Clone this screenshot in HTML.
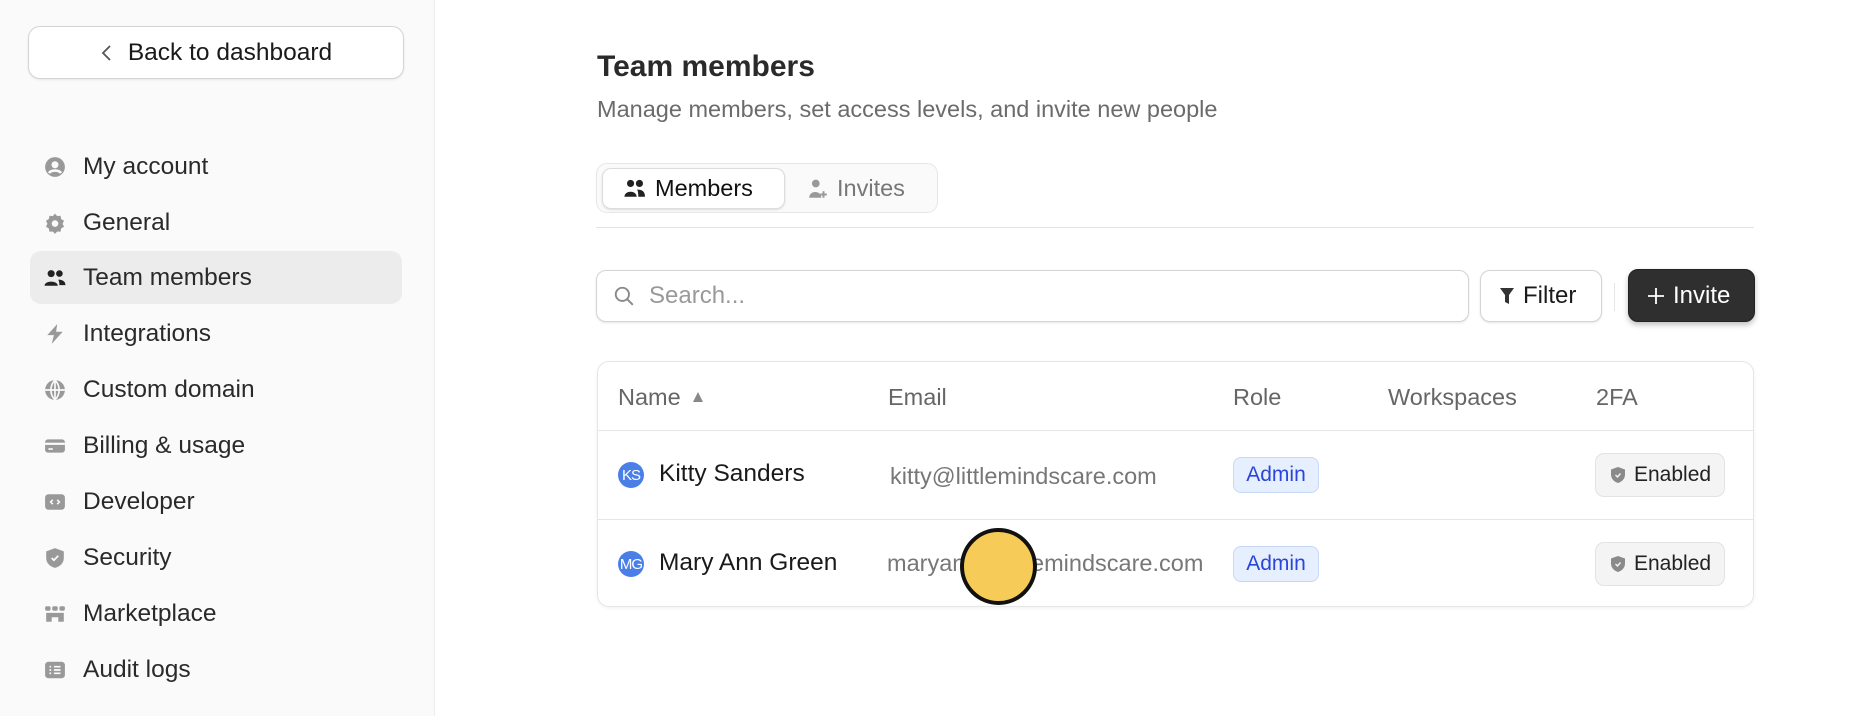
<!DOCTYPE html>
<html><head><style>
*{box-sizing:border-box;margin:0;padding:0}
body{width:1856px;height:716px;overflow:hidden;background:#fff;font-family:"Liberation Sans",sans-serif;color:#1a1a1a;position:relative}
.side{position:absolute;left:0;top:0;width:435px;height:716px;background:#fafafa;border-right:1px solid #ececec}
.back{position:absolute;left:28px;top:26px;width:376px;height:53px;border:1px solid #d4d4d4;border-radius:12px;background:#fff;box-shadow:0 1px 2px rgba(0,0,0,.08);font-size:24.5px;display:flex;align-items:center;justify-content:center;gap:14px}
.nav{position:absolute;left:30px;width:372px;height:53px;border-radius:11px;display:flex;align-items:center;font-size:24.5px;color:#2a2a2a}
.nav svg{position:absolute;left:14px;width:22px;height:22px}
.nav span{position:absolute;left:53px}
.act{background:#ececec}
.abs{position:absolute}
.h1{left:597px;top:50px;font-size:30px;font-weight:bold;color:#2a2a2a}
.sub{left:597px;top:96px;font-size:23.5px;color:#6b6b6b}
.tabs{left:596px;top:163px;width:342px;height:50px;border:1px solid #e6e6e6;border-radius:11px;background:#fafafa}
.tab{position:absolute;top:4px;height:41px;border-radius:9px;display:flex;align-items:center;font-size:23.5px;gap:8px;padding-left:22px}
.btn{border:1px solid #d4d4d4;border-radius:10px;background:#fff;box-shadow:0 1px 2px rgba(0,0,0,.1);display:flex;align-items:center;font-size:24px}
.tbl{left:597px;top:361px;width:1157px;height:246px;border:1px solid #e6e6e6;border-radius:12px;box-shadow:0 1px 3px rgba(0,0,0,.06);overflow:hidden}
.th{position:absolute;top:22px;font-size:23.5px;color:#666}
.row{position:absolute;left:0;width:100%;height:88px;border-top:1px solid #e6e6e6}
.av{position:absolute;left:20px;width:26px;height:26px;border-radius:50%;background:#4a7fe8;color:#fff;font-size:15px;display:flex;align-items:center;justify-content:center;letter-spacing:-1px}
.nm{position:absolute;left:61px;font-size:24.5px;color:#1a1a1a}
.em{position:absolute;left:292px;font-size:23.5px;color:#777}
.adm{position:absolute;left:635px;width:86px;height:36px;border:1px solid #c7d8f6;background:#e6effd;border-radius:8px;color:#2b45d8;font-size:21px;display:flex;align-items:center;justify-content:center}
.en{position:absolute;left:997px;width:130px;height:44px;border:1px solid #e3e3e3;background:#f4f4f4;border-radius:9px;font-size:21px;display:flex;align-items:center;gap:8px;padding-left:14px;color:#222}
</style></head><body>
<div class="side">
 <div class="back"><svg width="14" height="20" viewBox="0 0 14 20"><path d="M10 3 L3 10 L10 17" fill="none" stroke="#555" stroke-width="1.8"/></svg><span>Back to dashboard</span></div>
 <div class="nav" style="top:140px"><svg viewBox="0 0 20 20"><circle cx="10" cy="10" r="9" fill="#999"/><circle cx="10" cy="8" r="3.2" fill="#fafafa"/><path d="M4.5 15.5c2-3 9-3 11 0" stroke="#fafafa" stroke-width="2.4" fill="none"/></svg><span>My account</span></div>
 <div class="nav" style="top:196px"><svg viewBox="0 0 20 20"><path d="M10 1.5l2 2.2 3-.3.6 3 2.6 1.6-1.3 2.7 1.3 2.7-2.6 1.6-.6 3-3-.3-2 2.2-2-2.2-3 .3-.6-3L1.8 13.4l1.3-2.7L1.8 8l2.6-1.6.6-3 3 .3z" fill="#999"/><circle cx="10" cy="10.5" r="3" fill="#fafafa"/></svg><span>General</span></div>
 <div class="nav act" style="top:251px"><svg viewBox="0 0 20 20"><circle cx="6.5" cy="6" r="3.2" fill="#222"/><circle cx="14" cy="6" r="3" fill="#222"/><path d="M0.5 17c0-5 12-5 12 0z" fill="#222"/><path d="M13 11.5c3 0 6.5 1 6.5 5h-5.5c0-2-.3-3.5-1-5z" fill="#222"/></svg><span>Team members</span></div>
 <div class="nav" style="top:307px"><svg viewBox="0 0 20 20"><path d="M12 1L3 11h6l-2 8 10-11h-6z" fill="#999"/></svg><span>Integrations</span></div>
 <div class="nav" style="top:363px"><svg viewBox="0 0 20 20"><circle cx="10" cy="10" r="9" fill="#999"/><path d="M10 1v18M1 10h18M10 1c-5 5-5 13 0 18M10 1c5 5 5 13 0 18" stroke="#fafafa" stroke-width="1.5" fill="none"/></svg><span>Custom domain</span></div>
 <div class="nav" style="top:419px"><svg viewBox="0 0 20 20"><rect x="1" y="4" width="18" height="12" rx="2.5" fill="#999"/><rect x="1" y="7" width="18" height="2" fill="#fafafa"/><rect x="4" y="12" width="4" height="1.5" fill="#fafafa"/></svg><span>Billing &amp; usage</span></div>
 <div class="nav" style="top:475px"><svg viewBox="0 0 20 20"><rect x="1" y="3" width="18" height="14" rx="3" fill="#999"/><path d="M8 8l-2 2 2 2M12 8l2 2-2 2" stroke="#fafafa" stroke-width="1.4" fill="none"/></svg><span>Developer</span></div>
 <div class="nav" style="top:531px"><svg viewBox="0 0 20 20"><path d="M10 1l8 3v6c0 5-4 8-8 9-4-1-8-4-8-9V4z" fill="#999"/><path d="M7 10l2 2 4-4" stroke="#fafafa" stroke-width="1.6" fill="none"/></svg><span>Security</span></div>
 <div class="nav" style="top:587px"><svg viewBox="0 0 20 20"><rect x="1" y="3" width="5" height="4" rx="1.5" fill="#999"/><rect x="7.5" y="3" width="5" height="4" rx="1.5" fill="#999"/><rect x="14" y="3" width="5" height="4" rx="1.5" fill="#999"/><path d="M2 9h16v8h-5v-4h-6v4H2z" fill="#999"/></svg><span>Marketplace</span></div>
 <div class="nav" style="top:643px"><svg viewBox="0 0 20 20"><rect x="1" y="2.5" width="18" height="15" rx="3" fill="#999"/><path d="M5 7h1.5M9 7h6M5 10h1.5M9 10h6M5 13h1.5M9 13h6" stroke="#fafafa" stroke-width="1.5"/></svg><span>Audit logs</span></div>
</div>

<div class="abs h1">Team members</div>
<div class="abs sub">Manage members, set access levels, and invite new people</div>
<div class="abs tabs">
 <div class="tab" style="left:5px;width:183px;background:#fff;border:1px solid #ddd;box-shadow:0 1px 2px rgba(0,0,0,.12);color:#111;padding-left:20px"><svg width="24" height="20" viewBox="0 0 20 18"><circle cx="6" cy="4" r="3.2" fill="#222"/><circle cx="14" cy="4" r="3.2" fill="#222"/><path d="M0.5 16c0-6 11-6 11 0z" fill="#222"/><path d="M12 9.5c4 0 7 1.5 7 6.5h-6c0-3-.4-5-1-6.5z" fill="#222"/></svg>Members</div>
 <div class="tab" style="left:192px;width:140px;color:#777;padding-left:18px"><svg width="22" height="22" viewBox="0 0 20 20"><circle cx="8" cy="5" r="3.5" fill="#999"/><path d="M2 18c0-7 11-7 11 0z" fill="#999"/><path d="M15 12v6M12 15h6" stroke="#999" stroke-width="1.8"/></svg>Invites</div>
</div>
<div class="abs" style="left:596px;top:227px;width:1158px;height:1px;background:#e3e3e3"></div>

<div class="abs btn" style="left:596px;top:270px;width:873px;height:52px;padding-left:16px;color:#999;gap:14px"><svg width="22" height="22" viewBox="0 0 20 20"><circle cx="8.5" cy="8.5" r="6" fill="none" stroke="#888" stroke-width="1.7"/><path d="M13 13l5 5" stroke="#888" stroke-width="1.7"/></svg>Search...</div>
<div class="abs btn" style="left:1480px;top:270px;width:122px;height:52px;padding-left:18px;gap:8px"><svg width="16" height="20" viewBox="0 0 16 20"><path d="M1 2h14l-5 7v9l-4-2V9z" fill="#333"/></svg>Filter</div>
<div class="abs" style="left:1614px;top:283px;width:1px;height:28px;background:#e6e6e6"></div>
<div class="abs btn" style="left:1628px;top:269px;width:127px;height:53px;background:#2f2f2f;border-color:#222;color:#fff;padding-left:18px;gap:8px;box-shadow:0 3px 6px rgba(0,0,0,.25)"><svg width="18" height="18" viewBox="0 0 18 18"><path d="M9 1v16M1 9h16" stroke="#fff" stroke-width="1.8"/></svg>Invite</div>

<div class="abs tbl">
 <div class="th" style="left:20px">Name <svg width="14" height="14" viewBox="0 0 14 14" style="margin-left:4px"><path d="M7 1l5 10H2z" fill="#888"/></svg></div>
 <div class="th" style="left:290px">Email</div>
 <div class="th" style="left:635px">Role</div>
 <div class="th" style="left:790px">Workspaces</div>
 <div class="th" style="left:998px">2FA</div>
 <div class="row" style="top:68px">
  <div class="av" style="top:31px">KS</div><div class="nm" style="top:29px">Kitty Sanders</div>
  <div class="em" style="top:32px">kitty@littlemindscare.com</div>
  <div class="adm" style="top:26px">Admin</div>
  <div class="en" style="top:22px"><svg width="16" height="18" viewBox="0 0 16 18"><path d="M8 1l7 2.5v5c0 4.5-3.5 7.5-7 8.5-3.5-1-7-4-7-8.5v-5z" fill="#8a8a8a"/><path d="M5.5 9l2 2 3-3.5" stroke="#f4f4f4" stroke-width="1.4" fill="none"/></svg>Enabled</div>
 </div>
 <div class="row" style="top:157px">
  <div class="av" style="top:31px">MG</div><div class="nm" style="top:29px">Mary Ann Green</div>
  <div class="em" style="top:30px;left:289px">maryann@littlemindscare.com</div>
  <div class="adm" style="top:26px">Admin</div>
  <div class="en" style="top:22px"><svg width="16" height="18" viewBox="0 0 16 18"><path d="M8 1l7 2.5v5c0 4.5-3.5 7.5-7 8.5-3.5-1-7-4-7-8.5v-5z" fill="#8a8a8a"/><path d="M5.5 9l2 2 3-3.5" stroke="#f4f4f4" stroke-width="1.4" fill="none"/></svg>Enabled</div>
 </div>
</div>
<div class="abs" style="left:960px;top:528px;width:77px;height:77px;border-radius:50%;background:#f6cb57;border:4px solid #111"></div>
</body></html>
